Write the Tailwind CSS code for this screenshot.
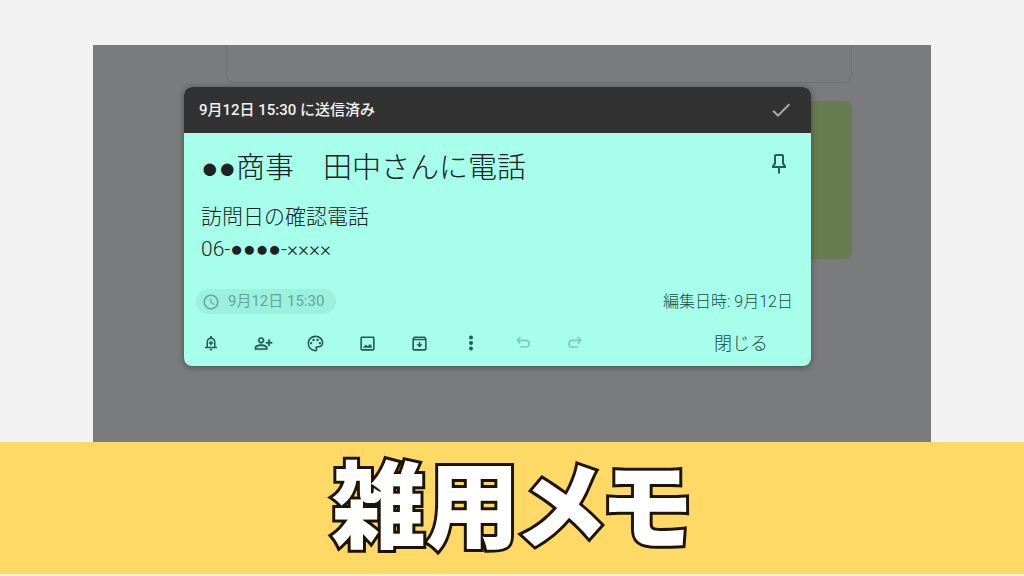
<!DOCTYPE html>
<html lang="ja">
<head>
  <meta charset="utf-8">
  <meta name="viewport" content="width=device-width, initial-scale=1">
  <title>雑用メモ</title>
  <script src="https://cdn.jsdelivr.net/npm/@tailwindcss/browser@4"></script>
</head>
<body class="min-h-screen flex flex-col bg-[#f2f2f2] font-[family-name:Roboto,'Liberation_Sans','Noto_Sans_CJK_JP',sans-serif]">
  <!-- Dimmed notes page -->
  <main class="relative flex-1 mt-[45px] mx-[93px] px-[91px] pt-[42px] pb-18 overflow-hidden bg-[#7a7b7d]">
    <!-- Notes behind the dialog -->
    <div class="absolute -top-4 left-[133px] right-[79px] h-[54px] rounded-lg border border-[#707173]"></div>
    <div class="absolute top-14 left-[133px] right-[79px] h-[158px] rounded-lg bg-[#677d51]"></div>

    <!-- Open note -->
    <section class="relative mr-[29px] rounded-lg overflow-hidden bg-[#a7ffeb] text-[#1d4a43] shadow-[0_1px_6px_rgba(0,0,0,0.4)]">
      <header class="flex items-center justify-between h-[46px] pl-[15px] pr-[18px] bg-[#323232]">
        <p class="text-[15px] font-medium text-[#f1f1f1]">9月12日 15:30 に送信済み</p>
        <button aria-label="完了にする" class="text-[#aaaaaa]">
          <svg class="size-6" viewBox="0 0 24 24" fill="currentColor"><path d="M9 16.17L4.83 12l-1.42 1.41L9 19 21 7l-1.41-1.41z"/></svg>
        </button>
      </header>

      <div class="flex items-start justify-between pt-4 pl-[17px] pr-5">
        <input aria-label="タイトル" value="●●商事　田中さんに電話" class="flex-1 h-10 text-[29px] font-light text-[#202124] outline-none">
        <button aria-label="メモを固定" class="mt-[3px] text-[#265a52]">
          <svg class="size-6" viewBox="0 0 24 24" fill="currentColor"><path d="M17 4v7l2 3v2h-6v5l-1 1-1-1v-5H5v-2l2-3V4c0-1.1.9-2 2-2h6c1.11 0 2 .89 2 2zM9 4v7.75L7.5 14h9L15 11.75V4H9z"/></svg>
        </button>
      </div>

      <textarea aria-label="メモ" rows="2" class="block w-full mt-3 px-[17px] resize-none text-[21px] leading-8 font-light text-[#202124] outline-none overflow-hidden">訪問日の確認電話
06-●●●●-××××</textarea>

      <div class="flex items-center justify-between mt-6 pl-3 pr-[18px]">
        <button class="flex items-center gap-2 h-[25px] pl-1.5 pr-3 rounded-full bg-[#9bf1de] text-[15px] text-[#66a499]">
          <svg class="size-[18px]" viewBox="0 0 24 24" fill="currentColor"><path d="M11.99 2C6.47 2 2 6.48 2 12s4.47 10 9.99 10C17.52 22 22 17.52 22 12S17.52 2 11.99 2zM12 20c-4.42 0-8-3.58-8-8s3.58-8 8-8 8 3.58 8 8-3.58 8-8 8zm.5-13H11v6l5.25 3.15.75-1.23-4.5-2.67z"/></svg>
          9月12日 15:30
        </button>
        <p class="text-[16px] font-light">編集日時: 9月12日</p>
      </div>

      <footer class="flex items-center justify-between mt-[11px] pb-[5px] pl-px pr-[43px]">
        <div class="flex text-[#265a52]">
          <button aria-label="リマインダー" class="flex items-center justify-center w-[52px] h-9">
            <svg class="size-[18px]" viewBox="0 0 24 24" fill="currentColor"><path d="M18 17v-6c0-3.07-1.63-5.64-4.5-6.32V4c0-.83-.67-1.5-1.5-1.5s-1.5.67-1.5 1.5v.68C7.64 5.36 6 7.92 6 11v6H4v2h16v-2h-2zm-2 0H8v-6c0-2.48 1.51-4.5 4-4.5s4 2.02 4 4.5v6zm-4 5c1.1 0 2-.9 2-2h-4c0 1.1.9 2 2 2zm1-13h-2v2H9v2h2v2h2v-2h2v-2h-2V9z"/></svg>
          </button>
          <button aria-label="共同編集者" class="flex items-center justify-center w-[52px] h-9">
            <svg class="size-[19px]" viewBox="0 0 24 24" fill="currentColor" stroke="currentColor" stroke-width="0.3"><path d="M9 12c2.21 0 4-1.79 4-4s-1.79-4-4-4-4 1.79-4 4 1.79 4 4 4zm0-6c1.1 0 2 .9 2 2s-.9 2-2 2-2-.9-2-2 .9-2 2-2zm0 7c-2.67 0-8 1.34-8 4v3h16v-3c0-2.66-5.33-4-8-4zm6 5H3v-.99C3.2 16.29 6.3 15 9 15s5.8 1.29 6 2v1zm5-8V7h-2v3h-3v2h3v3h2v-3h3v-2h-3z"/></svg>
          </button>
          <button aria-label="背景オプション" class="flex items-center justify-center w-[52px] h-9">
            <svg class="size-[19px]" viewBox="0 0 24 24" fill="currentColor"><path d="M12 22C6.49 22 2 17.51 2 12S6.49 2 12 2s10 4.04 10 9c0 3.31-2.69 6-6 6h-1.77c-.28 0-.5.22-.5.5 0 .12.05.23.13.33.41.47.64 1.06.64 1.67 0 1.38-1.12 2.5-2.5 2.5zm0-18c-4.41 0-8 3.59-8 8s3.59 8 8 8c.28 0 .5-.22.5-.5 0-.16-.08-.28-.14-.35-.41-.46-.63-1.05-.63-1.65 0-1.38 1.12-2.5 2.5-2.5H16c2.21 0 4-1.79 4-4 0-3.86-3.59-7-8-7z"/><circle cx="6.5" cy="11.5" r="1.5"/><circle cx="9.5" cy="7.5" r="1.5"/><circle cx="14.5" cy="7.5" r="1.5"/><circle cx="17.5" cy="11.5" r="1.5"/></svg>
          </button>
          <button aria-label="画像を追加" class="flex items-center justify-center w-[52px] h-9">
            <svg class="size-[19px]" viewBox="0 0 24 24" fill="currentColor"><path d="M19 3H5c-1.1 0-2 .9-2 2v14c0 1.1.9 2 2 2h14c1.1 0 2-.9 2-2V5c0-1.1-.9-2-2-2zm0 16H5V5h14v14zM6.5 17.5h11v-2l-2.5-3-2.5 3-2.5-2-3.500 3z"/></svg>
          </button>
          <button aria-label="アーカイブ" class="flex items-center justify-center w-[52px] h-9">
            <svg class="size-[19px]" viewBox="0 0 24 24" fill="currentColor"><path d="M20.54 5.23l-1.39-1.68C18.88 3.21 18.47 3 18 3H6c-.47 0-.88.21-1.16.55L3.46 5.23C3.17 5.57 3 6.02 3 6.5V19c0 1.1.9 2 2 2h14c1.1 0 2-.9 2-2V6.5c0-.48-.17-.93-.46-1.27zM6.24 5h11.52l.83 1H5.42l.82-1zM5 19V8h14v11H5zm8-9h-2v3H8l4 4 4-4h-3v-3z"/></svg>
          </button>
          <button aria-label="その他" class="flex items-center justify-center w-[52px] h-9">
            <svg class="size-5" viewBox="0 0 24 24" fill="currentColor"><circle cx="12" cy="5.5" r="2.4"/><circle cx="12" cy="12" r="2.4"/><circle cx="12" cy="18.5" r="2.4"/></svg>
          </button>
          <button aria-label="元に戻す" disabled class="flex items-center justify-center w-[52px] h-9 text-[#7fc9bb]">
            <svg class="size-4" viewBox="0 0 24 24" fill="none" stroke="currentColor" stroke-width="2.4"><path d="M8 3L3.5 8 8 13M4 8h12.5a4.500 5 0 0 1 0 10H7"/></svg>
          </button>
          <button aria-label="やり直す" disabled class="flex items-center justify-center w-[52px] h-9 text-[#7fc9bb]">
            <svg class="size-4" viewBox="0 0 24 24" fill="none" stroke="currentColor" stroke-width="2.4"><path d="M16 3l4.5 5L16 13M20 8H7.5a4.500 5 0 0 0 0 10H17"/></svg>
          </button>
        </div>
        <button class="text-[18px] font-light">閉じる</button>
      </footer>
    </section>
  </main>

  <!-- Caption band -->
  <div class="flex items-start justify-center h-[134px] bg-[#fed966] border-b-2 border-[#fbf1dc]">
    <h1 class="text-[94px] leading-[116px] font-black font-[family-name:'Noto_Sans_CJK_JP',sans-serif] text-white [font-feature-settings:'palt'] [-webkit-text-stroke:6px_#1c1405] [paint-order:stroke_fill]">雑用メモ</h1>
  </div>
</body>
</html>
